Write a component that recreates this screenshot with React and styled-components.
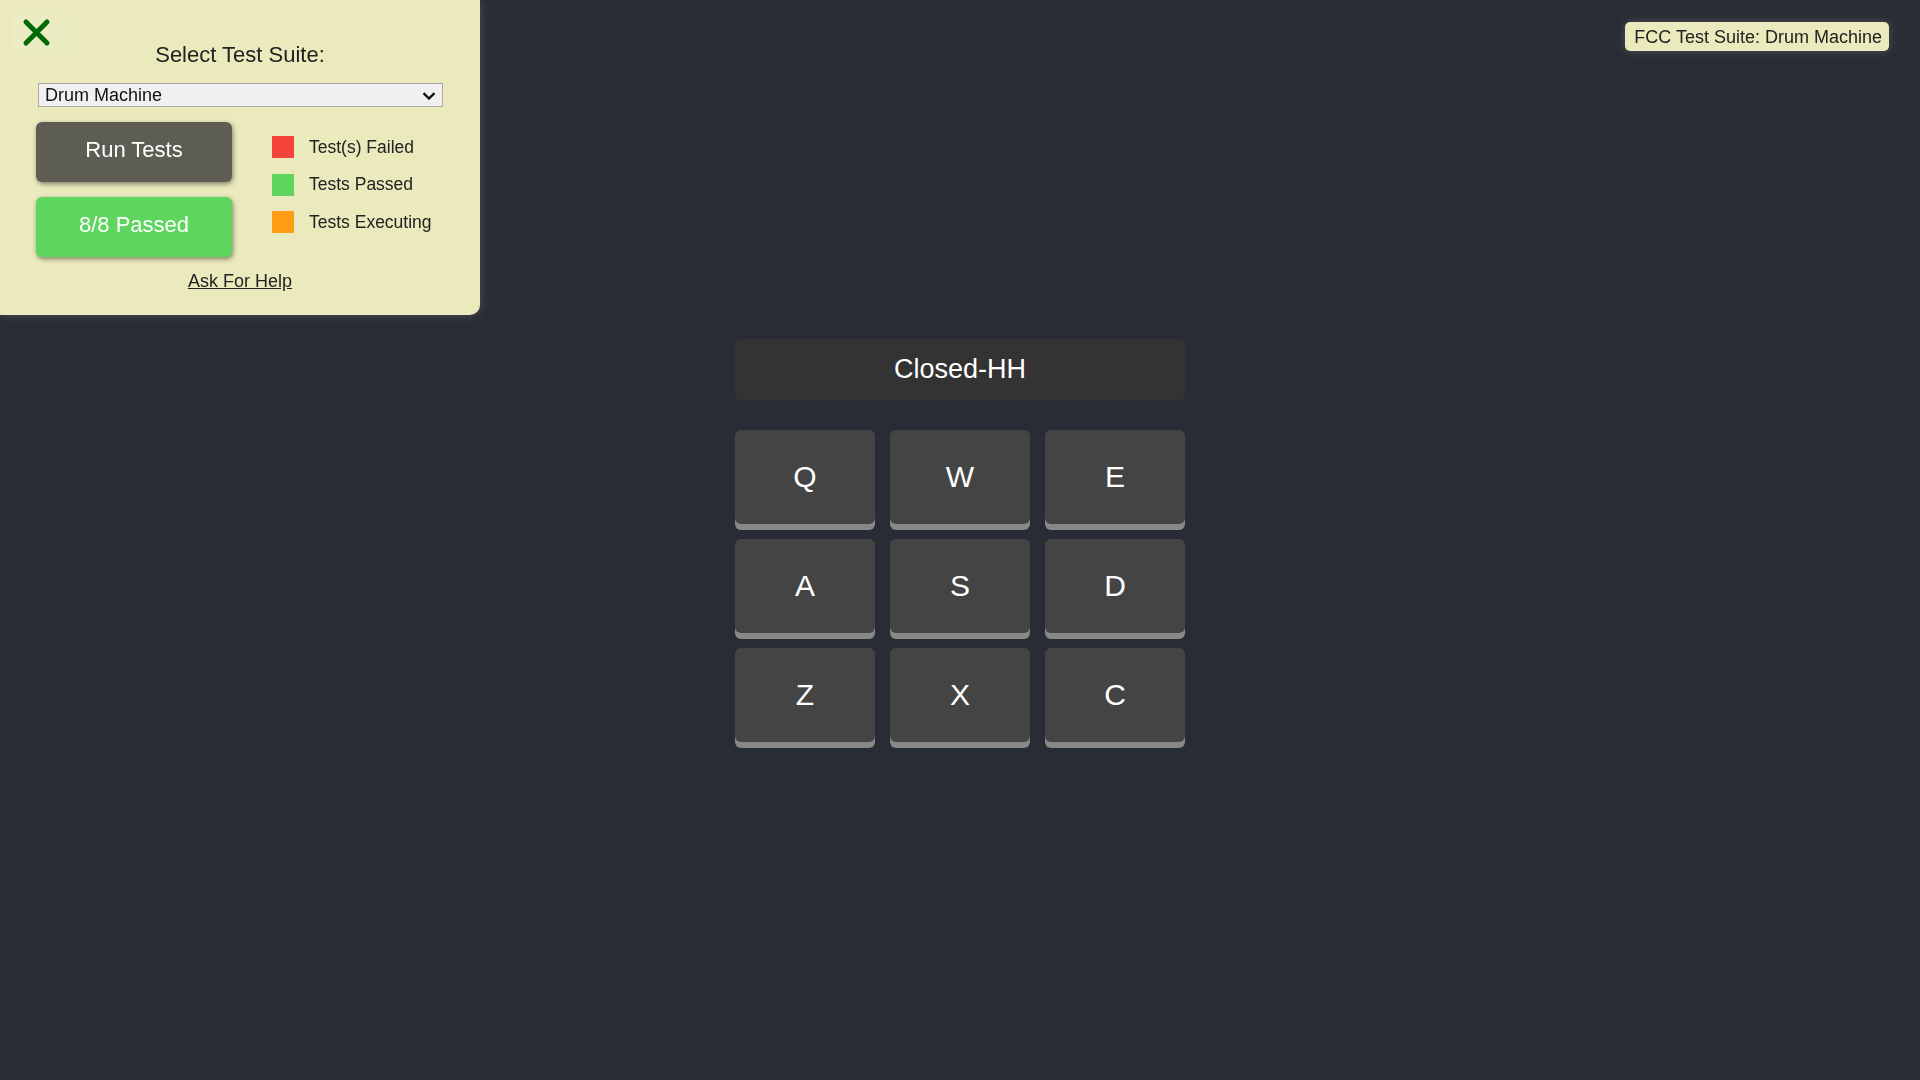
import React from "react";
import styled, { createGlobalStyle } from "styled-components";

const GlobalStyle = createGlobalStyle`
  html, body {
    margin: 0;
    padding: 0;
    background: #282c34;
    font-family: "Liberation Sans", Arial, sans-serif;
  }
  * { box-sizing: border-box; }
`;

const Page = styled.main`
  min-height: 100vh;
  display: flex;
  align-items: center;
  justify-content: center;
`;

const DrumMachine = styled.div`
  width: 450px;
  display: flex;
  flex-direction: column;
  gap: 30px;
`;

const Display = styled.div`
  height: 61px;
  border-radius: 6px;
  background: #333333;
  color: #ffffff;
  font-size: 27px;
  display: flex;
  align-items: center;
  justify-content: center;
`;

const PadGrid = styled.div`
  display: grid;
  grid-template-columns: repeat(3, 140px);
  grid-auto-rows: 94px;
  gap: 15px;
`;

const Pad = styled.div`
  border-radius: 6px;
  background: #444444;
  box-shadow: 0 6px 0 #888888;
  color: #ffffff;
  font-size: 30px;
  display: flex;
  align-items: center;
  justify-content: center;
`;

const Panel = styled.section`
  position: fixed;
  top: 0;
  left: 0;
  width: 480px;
  height: 315px;
  padding-top: 42px;
  background: rgba(255, 255, 204, 0.9);
  border-radius: 0 0 10px 0;
  box-shadow: 0 0 10px rgba(128, 128, 128, 0.45);
  color: #222222;
  display: flex;
  flex-direction: column;
`;

const CloseButton = styled.button`
  position: absolute;
  top: 11px;
  left: 12px;
  width: 59px;
  height: 44px;
  padding: 7px 20px 8px 10px;
  border: none;
  background: rgba(255, 255, 255, 0.08);
  display: flex;
  cursor: pointer;
`;

const Title = styled.h2`
  margin: 0;
  font-size: 22px;
  line-height: 25px;
  font-weight: normal;
  text-align: center;
`;

const SelectWrap = styled.div`
  position: relative;
  margin: 16px 0 0 38px;
  width: 405px;
  height: 24px;
`;

const Select = styled.select`
  appearance: none;
  -webkit-appearance: none;
  width: 100%;
  height: 100%;
  margin: 0;
  padding: 0 0 0 6px;
  border: 1px solid #a9a9a9;
  border-radius: 0;
  background: #f0f0f0;
  color: #111111;
  font-family: "Liberation Sans", Arial, sans-serif;
  font-size: 18px;
`;

const Chevron = styled.svg`
  position: absolute;
  right: 7px;
  top: 9px;
  pointer-events: none;
`;

const MainRow = styled.div`
  display: flex;
  gap: 40px;
  margin-top: 15px;
  padding-left: 36px;
`;

const ButtonColumn = styled.div`
  display: flex;
  flex-direction: column;
  gap: 15px;
`;

const ActionButton = styled.button`
  width: 196px;
  height: 60px;
  border: none;
  border-radius: 6px;
  background: ${(p) => p.$bg};
  color: #ffffff;
  font-family: "Liberation Sans", Arial, sans-serif;
  font-size: 22px;
  box-shadow: 1px 2px 5px rgba(0, 0, 0, 0.45);
  display: flex;
  align-items: center;
  justify-content: center;
  padding: 0 0 4px;
  cursor: pointer;
`;

const Legend = styled.ul`
  list-style: none;
  margin: 14px 0 0;
  padding: 0;
  display: flex;
  flex-direction: column;
  gap: 15.5px;
`;

const LegendItem = styled.li`
  display: flex;
  align-items: center;
  gap: 15px;
  height: 22px;
  font-size: 17.5px;
`;

const Swatch = styled.span`
  width: 22px;
  height: 22px;
  background: ${(p) => p.$color};
`;

const HelpLink = styled.a`
  margin-top: 14px;
  align-self: center;
  font-size: 18px;
  line-height: 21px;
  color: #222222;
  text-decoration: underline;
`;

const Indicator = styled.div`
  position: fixed;
  top: 22px;
  right: 31px;
  padding: 5px 7px 3px 9px;
  border-radius: 5px;
  background: rgba(255, 255, 204, 0.9);
  box-shadow: 0 0 10px rgba(128, 128, 128, 0.45);
  color: #222222;
  font-size: 18px;
  line-height: 21px;
`;

const pads = ["Q", "W", "E", "A", "S", "D", "Z", "X", "C"];

export default function App() {
  return (
    <>
      <GlobalStyle />
      <Page>
        <DrumMachine id="drum-machine">
          <Display id="display">Closed-HH</Display>
          <PadGrid>
            {pads.map((k) => (
              <Pad key={k}>{k}</Pad>
            ))}
          </PadGrid>
        </DrumMachine>
      </Page>

      <Panel>
        <CloseButton aria-label="close">
          <svg width="29" height="29" viewBox="0 0 29 29">
            <path
              d="M4 4 L25 25 M25 4 L4 25"
              stroke="#006b06"
              strokeWidth="5"
              strokeLinecap="round"
              fill="none"
            />
          </svg>
        </CloseButton>
        <Title>Select Test Suite:</Title>
        <SelectWrap>
          <Select defaultValue="drum">
            <option value="drum">Drum Machine</option>
          </Select>
          <Chevron width="14" height="8" viewBox="0 0 14 8">
            <path d="M1.5 1.2 L7 6.5 L12.5 1.2" stroke="#111" strokeWidth="2.4" fill="none" />
          </Chevron>
        </SelectWrap>
        <MainRow>
          <ButtonColumn>
            <ActionButton $bg="#5e5d53">Run Tests</ActionButton>
            <ActionButton $bg="#5dd55e">8/8 Passed</ActionButton>
          </ButtonColumn>
          <Legend>
            <LegendItem>
              <Swatch $color="#f4433a" />
              Test(s) Failed
            </LegendItem>
            <LegendItem>
              <Swatch $color="#5dd55e" />
              Tests Passed
            </LegendItem>
            <LegendItem>
              <Swatch $color="#ff9d17" />
              Tests Executing
            </LegendItem>
          </Legend>
        </MainRow>
        <HelpLink href="#">Ask For Help</HelpLink>
      </Panel>

      <Indicator>FCC Test Suite: Drum Machine</Indicator>
    </>
  );
}
